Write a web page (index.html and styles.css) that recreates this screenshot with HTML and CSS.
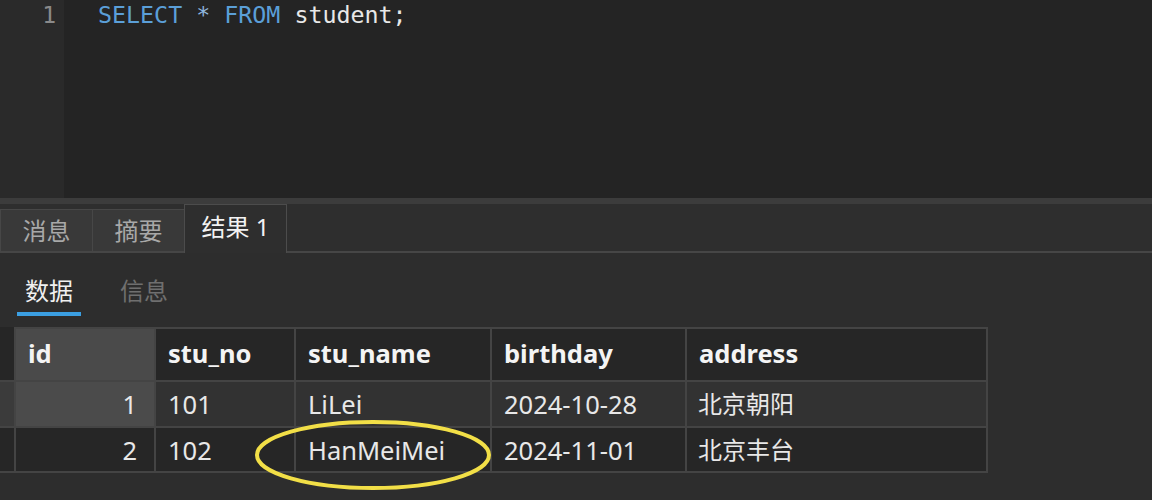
FILE: index.html
```html
<!DOCTYPE html>
<html>
<head>
<meta charset="utf-8">
<link rel="stylesheet" href="styles.css">
</head>
<body>
<div class="editor">
  <div class="gutter"><span class="ln">1</span></div>
  <div class="code"><span class="kw">SELECT</span> <span class="op">*</span> <span class="kw">FROM</span> <span class="id">student;</span></div>
</div>
<div class="splitter"></div>
<div class="tabs">
  <div class="tab">消息</div>
  <div class="tab">摘要</div>
  <div class="tab active">结果 1</div>
</div>
<div class="panel">
  <div class="subtabs">
    <div class="subtab on">数据</div>
    <div class="subtab">信息</div>
  </div>
  <div class="gridwrap">
    <table class="grid">
      <colgroup>
        <col class="c-rh"><col class="c-id"><col class="c-no"><col class="c-name"><col class="c-bd"><col class="c-addr">
      </colgroup>
      <tr class="head">
        <td class="rh"></td>
        <td class="sel">id</td>
        <td>stu_no</td>
        <td>stu_name</td>
        <td>birthday</td>
        <td>address</td>
      </tr>
      <tr class="r1">
        <td class="rh"></td>
        <td class="num sel">1</td>
        <td>101</td>
        <td>LiLei</td>
        <td>2024-10-28</td>
        <td class="cjk">北京朝阳</td>
      </tr>
      <tr class="r2">
        <td class="rh"></td>
        <td class="num">2</td>
        <td>102</td>
        <td>HanMeiMei</td>
        <td>2024-11-01</td>
        <td class="cjk">北京丰台</td>
      </tr>
    </table>
    <svg class="mark" width="250" height="80" viewBox="0 0 250 80"><ellipse cx="125" cy="40" rx="116" ry="33" fill="none" stroke="#f2df47" stroke-width="4"/></svg>
  </div>
</div>
</body>
</html>
```
FILE: styles.css
```css
html, body {
  margin: 0;
  padding: 0;
  background: #2c2c2c;
  width: 1152px;
  height: 500px;
  overflow: hidden;
}
body {
  font-family: "Noto Sans", "Noto Sans CJK SC", sans-serif;
  color: #e6e6e6;
}
.editor {
  display: flex;
  height: 198px;
}
.gutter {
  width: 64px;
  background: #2a2a2a;
  text-align: right;
  box-sizing: border-box;
  padding-right: 8px;
}
.code {
  flex: 1;
  background: #242424;
  padding-left: 34px;
  font-family: "DejaVu Sans Mono", monospace;
  font-size: 23.3px;
  line-height: 30px;
}
.ln {
  font-family: "DejaVu Sans Mono", monospace;
  font-size: 23px;
  line-height: 30px;
  color: #8a8a8a;
}
.kw { color: #5b9fd8; }
.op { color: #8fb6de; }
.id { color: #e8e8e8; }
.splitter {
  height: 6px;
  background: #3c3c3c;
}
.tabs {
  display: flex;
  align-items: flex-end;
  height: 47px;
  background: #2e2e2e;
  border-bottom: 2px solid #464646;
}
.tab {
  height: 42px;
  box-sizing: border-box;
  width: 93px;
  background: #393939;
  border: 1px solid #474747;
  border-bottom: none;
  margin-right: -1px;
  color: #a8a8a8;
  font-size: 24px;
  line-height: 41px;
  text-align: center;
}
.tab.active {
  width: 103px;
  background: #2e2e2e;
  color: #f2f2f2;
  border-color: #4c4c4c;
  margin-bottom: -2px;
  height: 49px;
  line-height: 44px;
}
.panel {
  background: #2d2d2d;
}
.subtabs {
  display: flex;
  height: 74px;
  padding-left: 17px;
  gap: 31px;
}
.subtab {
  font-size: 24px;
  line-height: 26px;
  padding: 25px 8px 0;
  height: 49px;
  box-sizing: border-box;
  color: #6f6f6f;
}
.subtab.on {
  color: #f0f0f0;
  border-bottom: 4px solid #3b9fe2;
  height: 63px;
}
.gridwrap {
  position: relative;
  height: 173px;
}
.grid {
  border-collapse: collapse;
  table-layout: fixed;
  width: 986px;
  font-size: 25.5px;
  line-height: 30px;
}
.c-rh { width: 14px; }
.c-id { width: 140px; }
.c-no { width: 140px; }
.c-name { width: 196px; }
.c-bd { width: 195px; }
.c-addr { width: 301px; }
.grid td {
  border: 2px solid #444;
  padding: 0 0 0 12px;
  white-space: nowrap;
  color: #e8e8e8;
}
.grid td.rh { padding: 0; }
.grid td.cjk { font-size: 24px; padding-left: 11px; }
.head td {
  height: 47px;
  background: #262626;
  font-weight: bold;
  color: #f4f4f4;
  padding-bottom: 4px;
}
.head td.sel { background: #4a4a4a; }
.head td.rh { background: #262626; border-top-color: #262626; border-left-color: #262626; }
.r1 td { height: 44px; background: #323232; }
.r1 td.sel { background: #4b4b4b; }
.r1 td.rh { background: #3b3b3b; border-left-color: #3b3b3b; }
.r2 td { height: 43px; background: #262626; }
.r2 td.rh { background: #262626; border-left-color: #262626; }
.grid td.num { text-align: right; padding: 0 17px 0 0; }
.mark {
  position: absolute;
  left: 248px;
  top: 88px;
}
```
